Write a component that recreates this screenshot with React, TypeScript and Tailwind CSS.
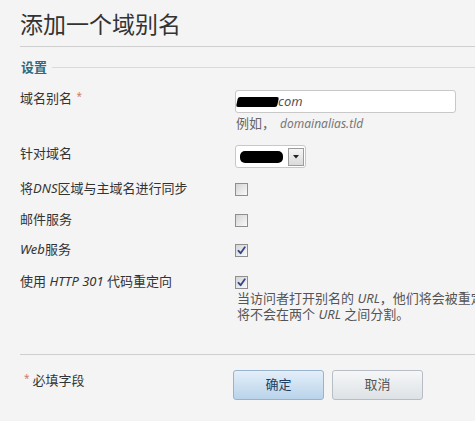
import React from 'react';

const Check: React.FC<{ checked?: boolean }> = ({ checked }) => (
  <div className="flex h-[13px] w-[13px] items-center justify-center border border-[#8f8f8f] bg-linear-to-br from-[#d4d4d4] to-[#fafafa]">
    {checked && (
      <svg width="9" height="9" viewBox="0 0 9 9">
        <path d="M1.5 4.8 L3.6 7.2 L7.8 1.2" fill="none" stroke="#33468a" strokeWidth="1.8" strokeLinecap="round" strokeLinejoin="round" />
      </svg>
    )}
  </div>
);

const Star: React.FC = () => <span className="text-[10px] leading-none text-[#d07a6a]">*</span>;

const Row: React.FC<{ label: React.ReactNode; className?: string; children: React.ReactNode }> = ({ label, className, children }) => (
  <div className={`flex items-start ${className ?? ''}`}>
    <div className="w-[215px] shrink-0 leading-4">{label}</div>
    <div className="min-w-0">{children}</div>
  </div>
);

export default function App() {
  return (
    <div className="h-[421px] w-full overflow-hidden bg-[#f4f4f4] pl-5 font-['Noto_Sans','Noto_Sans_CJK_SC',sans-serif] text-[13px] text-[#333]">
      <h1 className="border-b border-[#cfcfcf] pt-[7px] pb-[5px] text-[23px] font-normal leading-[34px] text-[#333]">添加一个域别名</h1>

      <div className="mt-[12px] flex items-center">
        <span className="pl-[1px] font-bold leading-4 text-[#2f6a7e]">设置</span>
        <div className="ml-[5px] h-px flex-1 bg-[#dadada]" />
      </div>

      <Row
        className="mt-[15px]"
        label={
          <>
            域名别名 <span className="relative -top-[3px] ml-[1px]"><Star /></span>
          </>
        }
      >
        <div className="flex h-[23px] w-[221px] items-center rounded-[3px] border border-[#c8c8c8] bg-white pl-[1px]">
          <span className="h-[10px] w-[41px] -skew-x-12 rounded-[2px] bg-black" />
          <span className="italic text-[#555]">com</span>
        </div>
        <div className="mt-[2px] pl-[1px] leading-4 text-[#666]">
          例如，<span className="ml-[5px] text-[12px] italic text-[#777]">domainalias.tld</span>
        </div>
      </Row>

      <Row className="mt-[13px]" label="针对域名">
        <div className="flex h-[23px] w-[71px] items-center rounded-[3px] border border-[#c8c8c8] bg-white pl-[4px]">
          <span className="h-[12px] w-[43px] rounded-[5px] bg-black" />
          <div className="mr-[1px] ml-auto flex h-[18px] w-[16px] items-center justify-center border border-[#9c9c9c] bg-linear-to-b from-[#f6f6f6] to-[#dadada]">
            <svg width="6" height="4" viewBox="0 0 6 4">
              <path d="M0 0 H6 L3 3.5 Z" fill="#222" />
            </svg>
          </div>
        </div>
      </Row>

      <Row
        className="mt-[12px]"
        label={
          <>
            将<span className="italic">DNS</span>区域与主域名进行同步
          </>
        }
      >
        <div className="mt-[3px]">
          <Check />
        </div>
      </Row>

      <Row className="mt-[15px]" label="邮件服务">
        <div className="mt-[3px]">
          <Check />
        </div>
      </Row>

      <Row
        className="mt-[14px]"
        label={
          <>
            <span className="italic">Web</span>服务
          </>
        }
      >
        <div className="mt-[3px]">
          <Check checked />
        </div>
      </Row>

      <Row
        className="mt-[16px]"
        label={
          <>
            使用 <span className="italic">HTTP 301</span> 代码重定向
          </>
        }
      >
        <div className="mt-[3px]">
          <Check checked />
        </div>
        <div className="mt-[1px] whitespace-nowrap pl-[2px] leading-4 text-[#555]">
          <div>
            当访问者打开别名的 <span className="italic">URL</span>，他们将会被重定向到主域名的网站。
          </div>
          <div>
            将不会在两个 <span className="italic">URL</span> 之间分割。
          </div>
        </div>
      </Row>

      <div className="mt-[32px] h-px bg-[#cfcfcf]" />

      <div className="flex items-start">
        <div className="mt-[17px] w-[213px] shrink-0 pl-[4px] leading-4">
          <span className="relative -top-[3px]"><Star /></span>
          <span className="ml-[3px]">必填字段</span>
        </div>
        <div className="mt-[15px] flex gap-[8px]">
          <button className="h-[30px] w-[91px] rounded-[3px] border border-[#97b3cd] bg-linear-to-b from-[#e4eff9] to-[#b9d3ea] text-[13px] text-[#1f3d5c]">
            确定
          </button>
          <button className="h-[30px] w-[91px] rounded-[3px] border border-[#b6bdc4] bg-linear-to-b from-[#f6f7f8] to-[#dde2e6] text-[13px] text-[#555]">
            取消
          </button>
        </div>
      </div>
    </div>
  );
}
